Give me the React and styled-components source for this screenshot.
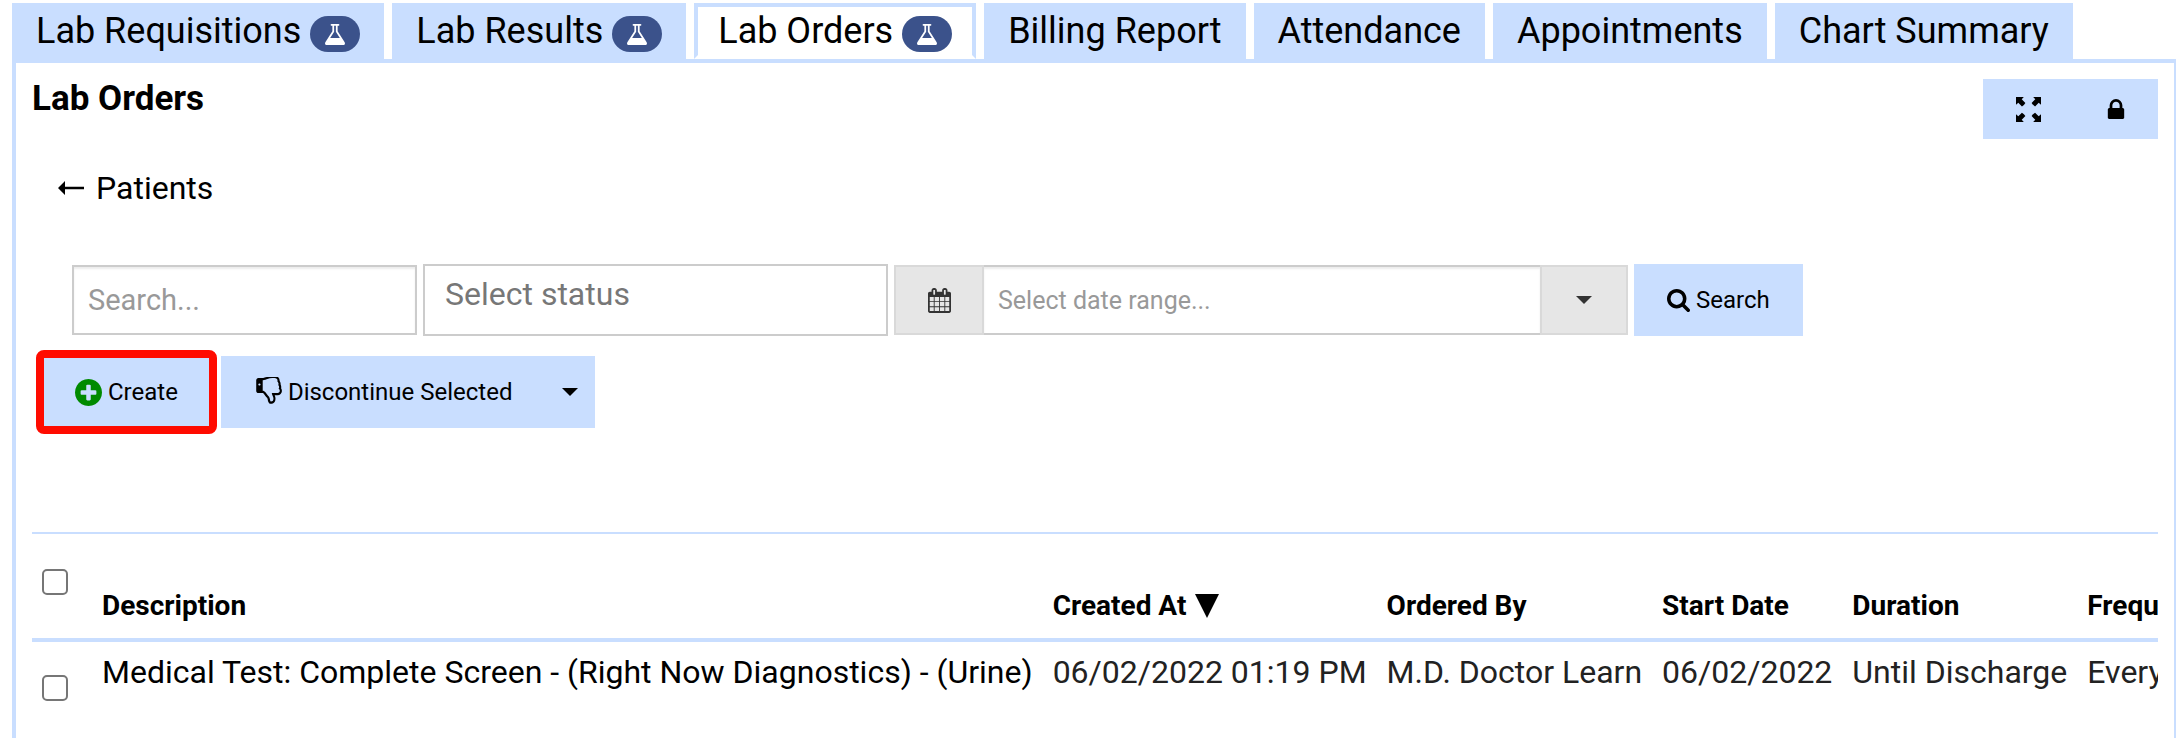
import styled, { createGlobalStyle } from "styled-components";

const colors = {
  accent: "#c9deff",
  badge: "#3b528b",
  border: "#cccccc",
  addonBorder: "#d9d9d9",
  addon: "#e6e6e6",
  text: "#222222",
  placeholder: "#999999",
  highlight: "#ff0b00",
};

const GlobalStyle = createGlobalStyle`
  *, *::before, *::after {
    box-sizing: border-box;
  }
  body {
    margin: 0;
    background: #ffffff;
    color: #000000;
    font-family: Roboto, "Liberation Sans", sans-serif;
    font-size: 32px;
    overflow: hidden;
  }
  button, input, select {
    font-family: inherit;
    border-radius: 0;
    margin: 0;
  }
`;

const paths = {
  flask:
    "M1591 1448q56 89 21.5 152.5t-140.5 63.5h-1152q-106 0-140.5-63.5t21.5-152.5l503-793v-399h-64q-26 0-45-19t-19-45 19-45 45-19h512q26 0 45 19t19 45-19 45-45 19h-64v399zm-779-725l-272 429h712l-272-429-20-31v-436h-128v436z",
  lock: "M640 768h512v-192q0-106-75-181t-181-75-181 75-75 181v192zm832 96v576q0 40-28 68t-68 28h-960q-40 0-68-28t-28-68v-576q0-40 28-68t68-28h32v-192q0-184 132-316t316-132 316 132 132 316v192h32q40 0 68 28t28 68z",
  search:
    "M1152 832q0-185-131.5-316.5t-316.5-131.5-316.5 131.5-131.5 316.5 131.5 316.5 316.5 131.5 316.5-131.5 131.5-316.5zm512 832q0 52-38 90t-90 38q-54 0-90-38l-343-342q-179 124-399 124-143 0-273.5-55.5t-225-150-150-225-55.5-273.5 55.5-273.5 150-225 225-150 273.5-55.5 273.5 55.5 225 150 150 225 55.5 273.5q0 220-124 399l343 343q37 37 37 90z",
  plusCircle:
    "M1344 960v-128q0-26-19-45t-45-19h-256v-256q0-26-19-45t-45-19h-128q-26 0-45 19t-19 45v256h-256q-26 0-45 19t-19 45v128q0 26 19 45t45 19h256v256q0 26 19 45t45 19h128q26 0 45-19t19-45v-256h256q26 0 45-19t19-45zm320-64q0 209-103 385.5t-279.5 279.5-385.5 103-385.5-103-279.5-279.5-103-385.5 103-385.5 279.5-279.5 385.5-103 385.5 103 279.5 279.5 103 385.5z",
  calendar:
    "M192 1664h288v-288h-288v288zm352 0h320v-288h-320v288zm-352-352h288v-320h-288v320zm352 0h320v-320h-320v320zm-352-384h288v-288h-288v288zm736 736h320v-288h-320v288zm-384-736h320v-288h-320v288zm768 736h288v-288h-288v288zm-384-352h320v-320h-320v320zm-352-864v-288q0-13-9.5-22.5t-22.5-9.5h-64q-13 0-22.5 9.5t-9.5 22.5v288q0 13 9.5 22.5t22.5 9.5h64q13 0 22.5-9.5t9.5-22.5zm736 864h288v-320h-288v320zm-384-384h320v-288h-320v288zm384 0h288v-288h-288v288zm32-480v-288q0-13-9.5-22.5t-22.5-9.5h-64q-13 0-22.5 9.5t-9.5 22.5v288q0 13 9.5 22.5t22.5 9.5h64q13 0 22.5-9.5t9.5-22.5zm384-64v1280q0 52-38 90t-90 38h-1408q-52 0-90-38t-38-90v-1280q0-52 38-90t90-38h128v-96q0-66 47-113t113-47h64q66 0 113 47t47 113v96h384v-96q0-66 47-113t113-47h64q66 0 113 47t47 113v96h128q52 0 90 38t38 90z",
  thumbsDown:
    "M384 448q0-26-19-45t-45-19-45 19-19 45 19 45 45 19 45-19 19-45zm1152 384q0-35-21.5-81t-53.5-47q15-17 25-47.5t10-55.5q0-69-53-119 18-31 18-69 0-37-17.5-73.5t-47.5-52.5q5-30 5-56 0-85-49-126t-136-41h-128q-131 0-342 73-5 2-29 10.5t-35.5 12.5-35 11.5-38 10.5-31 4-29.5 2h-32v640h32q16 0 35.5 9t40 27 38.5 35.5 40 44 34.5 42.5 31.5 41 23 30q55 68 77 91 41 43 59.5 109.5t30.5 125.5 38 85q96 0 128-47t32-145q0-59-48-160.5t-48-159.5h352q50 0 89-38.5t39-89.5zm128-1q0 103-76 179t-180 76h-176q48 99 48 192 0 118-35 186-35 69-102 101.5t-151 32.5q-51 0-90-37-34-33-54-82t-25.5-90.5-17.5-84.5-31-64q-48-50-107-127-101-131-137-155h-274q-53 0-90.5-37.5t-37.5-90.5v-640q0-53 37.5-90.5t90.5-37.5h288q22 0 138-40 128-44 223-66t200-22h112q140 0 226.5 79t85.5 216v5q60 77 60 178 0 22-3 43 38 67 38 144 0 36-9 69 49 73 49 163z",
};

// [name]: x, y, width, height of the drawn part
const boxes = {
  flask: "165 128 1462 1536",
  lock: "320 128 1152 1408",
  search: "0 128 1664 1664",
  plusCircle: "128 128 1536 1536",
  calendar: "64 0 1664 1792",
  thumbsDown: "0 0 1664 1792",
};

const Svg = styled.svg`
  display: block;
  flex-shrink: 0;
  fill: currentColor;
`;

const Icon = ({ name, width, height, color }) => (
  <Svg width={width} height={height} color={color} viewBox={boxes[name]} aria-hidden="true">
    <path d={paths[name]} />
  </Svg>
);

const ExpandIcon = () => (
  <Svg width="25" height="25" viewBox="0 0 24 24" aria-hidden="true">
    {[0, 90, 180, 270].map((angle) => (
      <path key={angle} transform={`rotate(${angle} 12 12)`} d="M0 0h7.500L5.500 2.200 9 5.700Q7.800 7.800 5.700 9L2.200 5.500 0 7.500z" />
    ))}
  </Svg>
);

const BackArrow = () => (
  <Svg width="26" height="14" viewBox="0 0 26 14" aria-hidden="true">
    <path d="M0 7l7-7v5.800h19v2.400H7V14z" />
  </Svg>
);

const Caret = styled.span`
  border: 8px solid transparent;
  border-top-color: currentColor;
  border-bottom: 0;
`;

const Page = styled.div`
  min-height: 100vh;
  padding: 3px 0 0 12px;
  display: flex;
  flex-direction: column;
`;

const Tabs = styled.nav`
  display: flex;
  gap: 8px;
`;

const Tab = styled.a`
  height: 56px;
  padding: 0 20px;
  display: flex;
  align-items: center;
  gap: 9px;
  border: 4px solid ${colors.accent};
  border-bottom-color: ${({ $active }) => ($active ? "#ffffff" : colors.accent)};
  background: ${({ $active }) => ($active ? "#ffffff" : colors.accent)};
  color: #000000;
  font-size: 36px;
  line-height: 48px;
  text-decoration: none;
  white-space: nowrap;
`;

const Badge = styled.span`
  width: 50px;
  height: 36px;
  margin-top: 6px;
  display: flex;
  align-items: center;
  justify-content: center;
  border-radius: 20px;
  background: ${colors.badge};
  color: #ffffff;
`;

const Panel = styled.main`
  flex: 1;
  padding: 16px 16px 0;
  border: 4px solid ${colors.accent};
  border-right-width: 2px;
  border-bottom: 0;
`;

const Header = styled.header`
  display: flex;
  justify-content: space-between;
`;

const Title = styled.h1`
  margin: 0;
  font-size: 35px;
  font-weight: 700;
  line-height: 40px;
`;

const Button = styled.button`
  position: relative;
  height: ${({ $small }) => ($small ? 60 : 72)}px;
  padding: 0 ${({ $narrow }) => ($narrow ? 17 : 33)}px;
  display: flex;
  align-items: center;
  gap: 6px;
  border: 0;
  background: ${colors.accent};
  color: #000000;
  font-size: 24px;
  white-space: nowrap;
`;

const ButtonGroup = styled.div`
  display: flex;
`;

const BackLink = styled.a`
  margin: 29px 0 0 26px;
  width: fit-content;
  display: flex;
  align-items: center;
  gap: 12px;
  color: #000000;
  line-height: 40px;
  text-decoration: none;
`;

const Filters = styled.form`
  margin: 56px 0 0 40px;
  display: flex;
  align-items: center;
  gap: 6px;
`;

const TextInput = styled.input`
  width: ${({ $width }) => $width}px;
  height: 70px;
  padding: 0 14px;
  border: 2px solid ${colors.border};
  border-width: ${({ $grouped }) => ($grouped ? "2px 0" : "2px")};
  box-shadow: inset 0 2px 2px rgba(0, 0, 0, 0.075);
  background: #ffffff;
  font-size: ${({ $grouped }) => ($grouped ? 25 : 29)}px;
  outline: 0;

  &::placeholder {
    color: ${colors.placeholder};
    opacity: 1;
  }
`;

const StatusSelect = styled.select`
  width: 465px;
  height: 72px;
  padding: 0 20px 12px;
  appearance: none;
  border: 2px solid ${colors.border};
  background: #ffffff;
  color: #777777;
  font-size: 32px;
`;

const InputGroup = styled.div`
  display: flex;
`;

const Addon = styled.button`
  width: ${({ $width }) => $width}px;
  height: 70px;
  padding: 0;
  display: flex;
  align-items: center;
  justify-content: center;
  border: 2px solid ${colors.addonBorder};
  background: ${colors.addon};
  color: #333333;
`;

const Actions = styled.div`
  margin: 20px 0 104px 10px;
  display: flex;
  gap: 10px;
`;

// Marks the button to press, drawn over its edges
const Highlight = styled.span`
  position: absolute;
  inset: -6px;
  border: 8px solid ${colors.highlight};
  border-radius: 8px;
  pointer-events: none;
`;

const TableWrap = styled.div`
  overflow: hidden;
  border-top: 2px solid ${colors.accent};
`;

const Table = styled.table`
  border-collapse: collapse;
  white-space: nowrap;
  color: ${colors.text};
`;

const HeadCell = styled.th`
  height: 106px;
  padding: 0 10px 14px;
  border-bottom: 4px solid ${colors.accent};
  color: #000000;
  font-size: 28px;
  font-weight: 700;
  line-height: 36px;
  text-align: left;
  vertical-align: bottom;
`;

const SortLabel = styled.span`
  display: flex;
  align-items: center;
  gap: 9px;
`;

const SortArrow = styled.span`
  border: 12px solid transparent;
  border-top: 24px solid #000000;
  border-bottom: 0;
`;

const Cell = styled.td`
  padding: 8px 10px;
  color: ${({ $strong }) => ($strong ? "#000000" : "inherit")};
  font-size: 32px;
  line-height: 44px;
  vertical-align: top;
`;

const Checkbox = styled.input`
  width: 26px;
  height: 26px;
  margin: ${({ $head }) => ($head ? "0 14px 29px 0" : "25px 14px 0 0")};
  display: block;
  appearance: none;
  border: 2px solid #767676;
  border-radius: 5px;
  background: #ffffff;
`;

const tabs = [
  { label: "Lab Requisitions", badge: true },
  { label: "Lab Results", badge: true },
  { label: "Lab Orders", badge: true, active: true },
  { label: "Billing Report" },
  { label: "Attendance" },
  { label: "Appointments" },
  { label: "Chart Summary" },
];

const orders = [
  {
    description: "Medical Test: Complete Screen - (Right Now Diagnostics) - (Urine)",
    createdAt: "06/02/2022 01:19 PM",
    orderedBy: "M.D. Doctor Learn",
    startDate: "06/02/2022",
    duration: "Until Discharge",
    frequency: "Every Day",
  },
];

const OrdersTable = () => (
  <TableWrap>
    <Table>
      <thead>
        <tr>
          <HeadCell>
            <Checkbox $head type="checkbox" aria-label="Select all orders" />
          </HeadCell>
          <HeadCell>Description</HeadCell>
          <HeadCell aria-sort="descending">
            <SortLabel>
              Created At <SortArrow />
            </SortLabel>
          </HeadCell>
          <HeadCell>Ordered By</HeadCell>
          <HeadCell>Start Date</HeadCell>
          <HeadCell>Duration</HeadCell>
          <HeadCell>Frequency</HeadCell>
        </tr>
      </thead>
      <tbody>
        {orders.map((order) => (
          <tr key={order.description}>
            <Cell>
              <Checkbox type="checkbox" aria-label={order.description} />
            </Cell>
            <Cell $strong>{order.description}</Cell>
            <Cell>{order.createdAt}</Cell>
            <Cell>{order.orderedBy}</Cell>
            <Cell>{order.startDate}</Cell>
            <Cell>{order.duration}</Cell>
            <Cell>{order.frequency}</Cell>
          </tr>
        ))}
      </tbody>
    </Table>
  </TableWrap>
);

export default function App() {
  return (
    <Page>
      <GlobalStyle />
      <Tabs>
        {tabs.map(({ label, badge, active }) => (
          <Tab key={label} href="#" $active={active} aria-current={active ? "page" : undefined}>
            {label}
            {badge && (
              <Badge>
                <Icon name="flask" width={20} height={21} />
              </Badge>
            )}
          </Tab>
        ))}
      </Tabs>
      <Panel>
        <Header>
          <Title>Lab Orders</Title>
          <ButtonGroup>
            <Button $small aria-label="Full screen">
              <ExpandIcon />
            </Button>
            <Button $small aria-label="Lock">
              <Icon name="lock" width={18} height={20} />
            </Button>
          </ButtonGroup>
        </Header>
        <BackLink href="#">
          <BackArrow />
          Patients
        </BackLink>
        <Filters onSubmit={(event) => event.preventDefault()}>
          <TextInput $width={345} placeholder="Search..." aria-label="Search orders" />
          <StatusSelect aria-label="Status">
            <option>Select status</option>
          </StatusSelect>
          <InputGroup>
            <Addon type="button" $width={90} aria-label="Open calendar">
              <Icon name="calendar" width={23} height={25} />
            </Addon>
            <TextInput $grouped $width={556} placeholder="Select date range..." aria-label="Date range" />
            <Addon type="button" $width={88} aria-label="Date range presets">
              <Caret />
            </Addon>
          </InputGroup>
          <Button>
            <Icon name="search" width={23} height={23} />
            Search
          </Button>
        </Filters>
        <Actions>
          <Button>
            <Icon name="plusCircle" width={27} height={27} color="#008a00" />
            Create
            <Highlight />
          </Button>
          <ButtonGroup>
            <Button>
              <Icon name="thumbsDown" width={28} height={30} />
              Discontinue Selected
            </Button>
            <Button $narrow aria-label="More actions">
              <Caret />
            </Button>
          </ButtonGroup>
        </Actions>
        <OrdersTable />
      </Panel>
    </Page>
  );
}
